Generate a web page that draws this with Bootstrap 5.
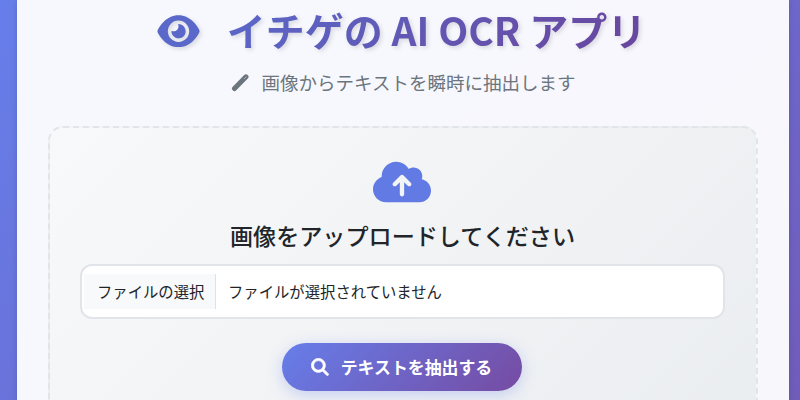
<!DOCTYPE html>
<html lang="ja">
<head>
<meta charset="utf-8">
<title>イチゲの AI OCR アプリ</title>
<link href="https://cdn.jsdelivr.net/npm/bootstrap@5.3.0/dist/css/bootstrap.min.css" rel="stylesheet">
<style>
html,body{height:400px;overflow:hidden}
body{background:linear-gradient(135deg,#667eea 0%,#764ba2 100%) 0 0/800px 1000px no-repeat;font-family:"Noto Sans CJK JP","Noto Sans",sans-serif;padding:0 11px 0 17px}
.app-panel{background:rgba(255,255,255,.95);height:520px;padding:0 31px;box-shadow:0 0 6px rgba(0,0,0,.14)}
.app-title{background:linear-gradient(135deg,#5a68c9,#6a459c);-webkit-background-clip:text;background-clip:text;color:transparent;font-size:39px;font-weight:700;line-height:44px;margin:0;filter:drop-shadow(2px 2px 2px rgba(0,0,0,.12))}
.app-head{padding:7px 3px 0 0;gap:27px}
.app-eye{width:43px;height:38px;filter:drop-shadow(2px 2px 2px rgba(0,0,0,.12))}
.app-sub{color:#6c757d;font-size:18.5px;line-height:28px;margin-top:17px;gap:12px}
.app-pen{width:19px;height:19px}
.drop-zone{margin-top:30px;height:400px;background:linear-gradient(135deg,#f8f9fa,#e9ecef);border:2px dashed #e1e4e8;border-radius:15px;padding:31px 31px 0 30px}
.cloud{width:58px;height:46px;display:block;margin-right:2px}
.drop-title{font-size:23.1px;font-weight:500;line-height:32px;color:#212529;margin:14px 0 13px}
.file-box{height:55px;background:#fff;border:2px solid #e1e4e8;border-radius:12px;padding:8px 2px;font-size:15.35px;color:#212529}
.file-btn{background:#f8f9fa;border-right:1px solid #dee2e6;width:132px;padding-left:13px;white-space:nowrap}
.file-name{padding-left:12px}
.go-btn{margin:24px 2px 0 0;width:240px;height:48px;border:0;border-radius:24px;background:linear-gradient(135deg,#667eea,#764ba2);color:#fff;font-size:16.9px;font-weight:700;gap:12px;box-shadow:0 4px 15px rgba(102,126,234,.3)}
.go-btn svg{width:18px;height:18px}
</style>
</head>
<body>
<main class="app-panel">
  <div class="d-flex justify-content-center align-items-center app-head">
    <svg class="app-eye" viewBox="0 -40 576 512" aria-hidden="true"><path fill="#5a68c9" d="M288 32c-80.800 0-145.500 36.800-192.600 80.600C48.600 156 17.300 208 6.600 233.700c-3.300 7.900-3.300 16.700 0 24.600C17.300 284 48.600 336 95.400 379.400C142.500 423.200 207.200 460 288 460s145.500-36.800 192.600-80.600c46.800-43.500 78.100-95.400 88.800-121.100c3.300-7.900 3.300-16.700 0-24.600c-10.700-25.700-42-77.700-88.800-121.100C433.500 68.800 368.800 32 288 32zM144 246a144 144 0 1 1 288 0 144 144 0 1 1 -288 0zm144-64c0 35.300-28.700 64-64 64c-7.100 0-13.900-1.200-20.300-3.300c-5.500-1.800-11.900 1.600-11.700 7.400c.3 6.900 1.300 13.800 3.200 20.700c13.700 51.200 66.400 81.600 117.600 67.900s81.600-66.400 67.900-117.600c-11.100-41.500-47.800-69.400-88.600-71.100c-5.800-.2-9.200 6.100-7.400 11.700c2.100 6.400 3.300 13.200 3.300 20.300z"/></svg>
    <h1 class="app-title">イチゲの AI OCR アプリ</h1>
  </div>
  <p class="app-sub d-flex justify-content-center align-items-center mb-0">
    <svg class="app-pen" viewBox="0 0 19 19" aria-hidden="true"><path fill="none" stroke="#6c757d" stroke-width="5" stroke-linecap="round" d="M3.500 15.500 15 3.800"/><path fill="none" stroke="#aab0b6" stroke-width="1" stroke-linecap="round" d="M13.300 5.800 15.200 3.800"/></svg>
    <span>画像からテキストを瞬時に抽出します</span>
  </p>
  <section class="drop-zone text-center">
    <div class="d-flex justify-content-center">
      <svg class="cloud" viewBox="0 32 640 448" aria-hidden="true"><path fill="#627ae4" d="M144 480C64.500 480 0 415.500 0 336c0-62.800 40.200-116.200 96.200-135.900c-.1-2.700-.2-5.400-.2-8.100c0-88.400 71.600-160 160-160c59.300 0 111 32.200 138.700 80.200C409.900 102 428.300 96 448 96c53 0 96 43 96 96c0 12.200-2.300 23.800-6.400 34.600C596 238.400 640 290.100 640 352c0 70.700-57.300 128-128 128H144zm79-217c-9.400 9.400-9.400 24.600 0 33.900s24.600 9.400 33.900 0l39-39V392c0 13.300 10.700 24 24 24s24-10.700 24-24V257.900l39 39c9.400 9.400 24.600 9.400 33.900 0s9.400-24.600 0-33.900l-80-80c-9.400-9.400-24.600-9.400-33.900 0l-80 80z"/></svg>
    </div>
    <h2 class="drop-title">画像をアップロードしてください</h2>
    <div class="file-box d-flex text-start">
      <span class="file-btn d-flex align-items-center">ファイルの選択</span>
      <span class="file-name d-flex align-items-center">ファイルが選択されていません</span>
    </div>
    <button type="button" class="btn go-btn d-inline-flex align-items-center justify-content-center">
      <svg viewBox="-15 -15 542 542" aria-hidden="true"><path fill="#fff" stroke="#fff" stroke-width="26" d="M416 208c0 45.900-14.900 88.300-40 122.700L502.600 457.400c12.500 12.500 12.500 32.800 0 45.300s-32.800 12.500-45.300 0L330.700 376c-34.400 25.200-76.800 40-122.700 40C93.100 416 0 322.900 0 208S93.100 0 208 0S416 93.100 416 208zM208 352a144 144 0 1 0 0-288 144 144 0 1 0 0 288z"/></svg>
      <span>テキストを抽出する</span>
    </button>
  </section>
</main>
<script src="https://cdn.jsdelivr.net/npm/bootstrap@5.3.0/dist/js/bootstrap.bundle.min.js"></script>
</body>
</html>
